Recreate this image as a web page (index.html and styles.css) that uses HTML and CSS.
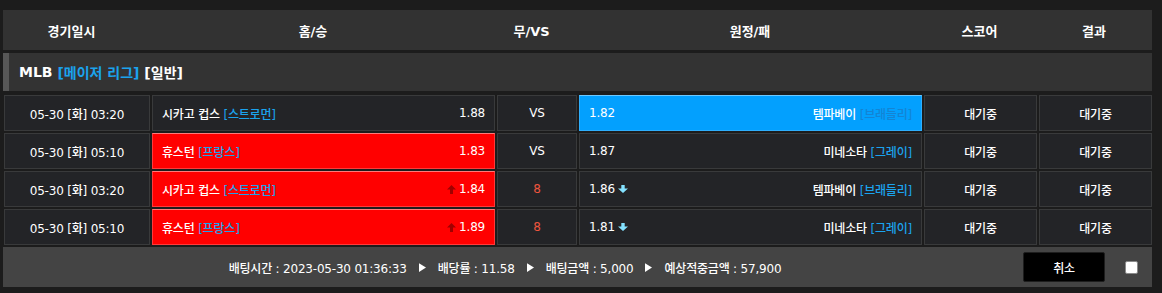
FILE: index.html
```html
<!DOCTYPE html>
<html lang="ko">
<head>
<meta charset="utf-8">
<title>베팅 내역</title>
<link rel="stylesheet" href="styles.css">
</head>
<body>
<div class="board">
  <div class="head">
    <div>경기일시</div>
    <div>홈/승</div>
    <div>무/VS</div>
    <div>원정/패</div>
    <div>스코어</div>
    <div>결과</div>
  </div>
  <div class="league">MLB <span class="blue">[메이저 리그]</span> [일반]</div>
  <div class="rows">
    <div class="row">
      <div class="cell c">05-30 [화] 03:20</div>
      <div class="cell home"><span class="team">시카고 컵스 <span class="blue">[스트로먼]</span></span><span class="odd">1.88</span></div>
      <div class="cell c">VS</div>
      <div class="cell away sel-blue"><span class="odd">1.82</span><span class="team">템파베이 <span class="blue">[브래들리]</span></span></div>
      <div class="cell c">대기중</div>
      <div class="cell c">대기중</div>
    </div>
    <div class="row">
      <div class="cell c">05-30 [화] 05:10</div>
      <div class="cell home sel-red"><span class="team">휴스턴 <span class="blue">[프랑스]</span></span><span class="odd">1.83</span></div>
      <div class="cell c">VS</div>
      <div class="cell away"><span class="odd">1.87</span><span class="team">미네소타 <span class="blue">[그레이]</span></span></div>
      <div class="cell c">대기중</div>
      <div class="cell c">대기중</div>
    </div>
    <div class="row">
      <div class="cell c">05-30 [화] 03:20</div>
      <div class="cell home sel-red"><span class="team">시카고 컵스 <span class="blue">[스트로먼]</span></span><span class="odd"><svg class="arrow up" viewBox="0 0 9 9"><path d="M4.5 0 L9 4.5 H6 V9 H3 V4.5 H0 Z"/></svg>1.84</span></div>
      <div class="cell c draw">8</div>
      <div class="cell away"><span class="odd">1.86<svg class="arrow down" viewBox="0 0 10 8"><path d="M5 8 L10 3.5 H6.7 V0 H3.3 V3.5 H0 Z"/></svg></span><span class="team">템파베이 <span class="blue">[브래들리]</span></span></div>
      <div class="cell c">대기중</div>
      <div class="cell c">대기중</div>
    </div>
    <div class="row">
      <div class="cell c">05-30 [화] 05:10</div>
      <div class="cell home sel-red"><span class="team">휴스턴 <span class="blue">[프랑스]</span></span><span class="odd"><svg class="arrow up" viewBox="0 0 9 9"><path d="M4.5 0 L9 4.5 H6 V9 H3 V4.5 H0 Z"/></svg>1.89</span></div>
      <div class="cell c draw">8</div>
      <div class="cell away"><span class="odd">1.81<svg class="arrow down" viewBox="0 0 10 8"><path d="M5 8 L10 3.5 H6.7 V0 H3.3 V3.5 H0 Z"/></svg></span><span class="team">미네소타 <span class="blue">[그레이]</span></span></div>
      <div class="cell c">대기중</div>
      <div class="cell c">대기중</div>
    </div>
  </div>
  <div class="foot">
    <div class="summary">
      <span>배팅시간 : 2023-05-30 01:36:33</span>
      <svg class="tri" viewBox="0 0 8 10"><path d="M0 0 L8 5 L0 10 Z"/></svg>
      <span>배당률 : 11.58</span>
      <svg class="tri" viewBox="0 0 8 10"><path d="M0 0 L8 5 L0 10 Z"/></svg>
      <span>배팅금액 : 5,000</span>
      <svg class="tri" viewBox="0 0 8 10"><path d="M0 0 L8 5 L0 10 Z"/></svg>
      <span>예상적중금액 : 57,900</span>
    </div>
    <button class="cancel" type="button">취소</button>
    <span class="check"></span>
  </div>
</div>
</body>
</html>
```
FILE: styles.css
```css
html, body {
  background: #1c1c1c;
}
body {
  margin: 10px 10px 0 3px;
  font-family: "DejaVu Sans", "Noto Sans CJK KR", sans-serif;
  color: #ffffff;
  font-size: 12px;
  font-weight: 500;
  letter-spacing: -0.2px;
}
.board {
  width: 1149px;
}
.head {
  display: grid;
  grid-template-columns: 137px 346px 91px 346px 113px 116px;
  height: 40px;
  align-items: center;
  background: #323232;
  font-size: 13px;
  font-weight: 700;
  letter-spacing: 0;
  text-align: center;
}
.league {
  margin-top: 3px;
  height: 38px;
  background: #333333;
  border-left: 6px solid #575757;
  padding-left: 10px;
  display: flex;
  align-items: center;
  font-size: 14px;
  font-weight: 700;
  letter-spacing: 0;
  white-space: pre;
  box-sizing: border-box;
}
.blue {
  color: #1ba3ee;
}
.rows {
  margin-top: 4px;
  padding-left: 1px;
  display: flex;
  flex-direction: column;
  gap: 2px;
}
.row {
  display: grid;
  grid-template-columns: 146px 343px 80px 343px 113px 113px;
  gap: 2px;
  height: 36px;
}
.cell {
  background: #232427;
  border: 1px solid #393a3b;
  display: flex;
  align-items: center;
  box-sizing: border-box;
  white-space: pre;
}
.cell.c {
  justify-content: center;
}
.home, .away {
  justify-content: space-between;
  padding: 0 9px;
}
.sel-red {
  background: #ff0000;
  border-color: #ff3a3a;
  border-top-color: #ff7a7a;
}
.sel-blue {
  background: #03a0fe;
  border-color: #2eaefc;
  border-top-color: #6cc8ff;
}
.sel-blue .blue {
  color: #1384d4;
}
.odd {
  display: flex;
  align-items: center;
}
.draw {
  color: #ef553e;
}
.arrow {
  display: block;
}
.arrow.up {
  width: 9px;
  height: 9px;
  margin-right: 3px;
  fill: #a00000;
}
.arrow.down {
  width: 10px;
  height: 8px;
  margin-left: 3px;
  fill: #84e2ff;
}
.foot {
  margin-top: 2px;
  height: 40px;
  background: #444444;
  display: flex;
  align-items: center;
  padding-right: 14px;
  box-sizing: border-box;
}
.summary {
  flex: 1;
  display: flex;
  justify-content: center;
  align-items: center;
  white-space: pre;
}
.tri {
  width: 7px;
  height: 9px;
  margin: 0 12px;
  fill: #ffffff;
}
.cancel {
  margin-left: 16px;
  width: 82px;
  height: 30px;
  background: #000000;
  border: 1px solid #1e1e1e;
  border-radius: 2px;
  color: #ffffff;
  font-family: inherit;
  font-size: 12px;
  font-weight: 500;
  letter-spacing: inherit;
  padding: 0;
}
.check {
  margin-left: 20px;
  width: 13px;
  height: 13px;
  background: #ffffff;
  border: 1px solid #8a8a8a;
  border-radius: 2px;
  box-sizing: border-box;
}
```
